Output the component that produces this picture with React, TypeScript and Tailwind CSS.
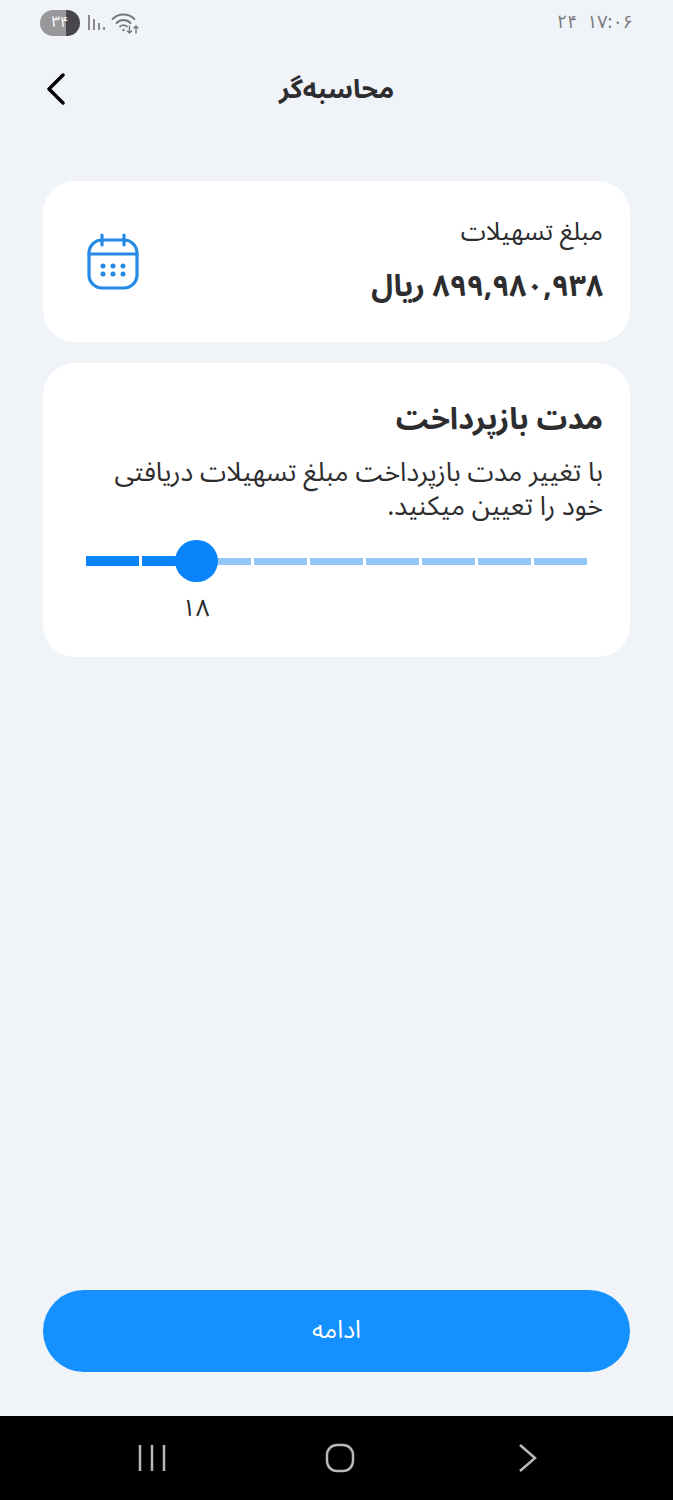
import React from 'react'

const persian = { fontFamily: '"Noto Sans Arabic", "DejaVu Sans", sans-serif' }

// status bar glyphs, drawn to match the phone's own
function Signal() {
  return (
    <svg width="20" height="18" viewBox="0 0 20 18" fill="none" stroke="#8a8a8d" strokeWidth="2">
      <path d="M2 1v15" />
      <path d="M7 5v11" />
      <path d="M12 9v7" />
      <path d="M17 13v3" />
    </svg>
  )
}

function Wifi() {
  return (
    <svg width="30" height="22" viewBox="0 0 30 22" fill="none" stroke="#77777a" strokeWidth="1.8" strokeLinecap="round">
      <path d="M1.5 7C7.5 1 17.500 1 23.500 7" />
      <path d="M5.500 11C9.500 7 15.500 7 19.500 11" />
      <path d="M9 14.500C11 13 14 13 16 14.500" />
      <circle cx="12.500" cy="18" r="1.200" fill="#77777a" stroke="none" />
      <path d="M18.500 14v7M16.500 19l2 2 2-2" strokeWidth="1.400" />
      <path d="M25 21v-7M23 16l2-2 2 2" strokeWidth="1.400" />
    </svg>
  )
}

function CalendarIcon() {
  return (
    <svg width="52" height="58" viewBox="0 0 52 58" fill="none" stroke="#2589e6" strokeWidth="3.200" strokeLinecap="round">
      <rect x="2" y="7" width="48" height="48" rx="13" />
      <path d="M2 21h48" />
      <path d="M15 2v10M37 2v10" />
      <g fill="#2589e6" stroke="none">
        <circle cx="16" cy="33" r="2.500" />
        <circle cx="26" cy="33" r="2.500" />
        <circle cx="36" cy="33" r="2.500" />
        <circle cx="16" cy="41" r="2.500" />
        <circle cx="26" cy="41" r="2.500" />
        <circle cx="36" cy="41" r="2.500" />
      </g>
    </svg>
  )
}

function RepaymentSlider() {
  const segments = [0, 1, 2, 3, 4, 5, 6, 7, 8]
  return (
    <div className="relative mr-[16px] mt-[16px] h-[42px]" dir="ltr">
      <div className="flex h-full items-center gap-[3px]">
        {segments.map((i) => (
          <div key={i} className={i < 2 ? 'h-[10px] flex-1 bg-[#0a84fb]' : 'h-[7px] flex-1 bg-[#92c6f5]'} />
        ))}
      </div>
      <div className="absolute left-[89px] top-0 h-[42px] w-[43px] rounded-full bg-[#0a84fb]" />
    </div>
  )
}

export default function App() {
  return (
    <div className="flex h-[1500px] flex-col bg-[#f0f3f8] text-[#2d2d30]" style={persian}>
      {/* Status bar */}
      <div className="flex h-[45px] items-center justify-between pl-10 pr-10" dir="ltr">
        <div className="flex items-center gap-[7px]">
          <div className="flex h-[26px] w-10 items-center justify-center rounded-full bg-[linear-gradient(90deg,#98989b_65%,#47474b_65%)] text-[15px] text-white">
            ۳۴
          </div>
          <Signal />
          <div className="-ml-[3px]">
            <Wifi />
          </div>
        </div>
        <div className="text-[18px] text-[#77777a]" dir="ltr">
          ۲۴&nbsp;&nbsp;۱۷:۰۶
        </div>
      </div>

      {/* Header */}
      <div className="relative flex h-[90px] items-center justify-center">
        <h1 className="text-[26.500px] font-bold leading-none" dir="rtl">
          محاسبه‌گر
        </h1>
        <svg
          className="absolute left-[46px] top-[28px]"
          width="20"
          height="32"
          viewBox="0 0 20 32"
          fill="none"
          stroke="#000"
          strokeWidth="3.400"
          strokeLinecap="round"
          strokeLinejoin="round"
        >
          <path d="M17 2 3 16l14 14" />
        </svg>
      </div>

      {/* Cards */}
      <div className="mt-[46px] flex flex-col gap-[21px] px-[43px]">
        <div className="flex h-[161px] items-center justify-between rounded-[32px] bg-white pl-[44px] pr-[27px]" dir="ltr">
          <CalendarIcon />
          <div className="pb-[2px] text-right" dir="rtl">
            <div className="text-[25.500px] leading-[34px] text-[#2d2d30]">مبلغ تسهیلات</div>
            <div className="mt-[18px] text-[29.800px] font-bold leading-[40px]">۸۹۹,۹۸۰,۹۳۸ ریال</div>
          </div>
        </div>

        <div className="h-[294px] rounded-[32px] bg-white pl-[43px] pr-[27px] pt-[35px]">
          <div className="text-right text-[30.500px] font-bold leading-[44px]" dir="rtl">
            مدت بازپرداخت
          </div>
          <p className="mt-[14px] text-right text-[26.600px] leading-[34px] text-[#2d2d30]" dir="rtl">
            با تغییر مدت بازپرداخت مبلغ تسهیلات دریافتی خود را تعیین میکنید.
          </p>
          <RepaymentSlider />
          <div className="ml-[96px] mt-[11px] w-6 text-center text-[24px] leading-[32px]" dir="ltr">
            ۱۸
          </div>
        </div>
      </div>

      {/* Continue button */}
      <div className="mt-auto px-[43px] pb-[44px]">
        <button className="flex h-[82px] w-full items-center justify-center rounded-full bg-[#1490ff] text-[25px] text-white" dir="rtl">
          ادامه
        </button>
      </div>

      {/* Android nav bar */}
      <div className="flex h-[84px] items-center justify-between bg-black pl-[138px] pr-[135px]">
        <svg width="28" height="28" viewBox="0 0 28 28" fill="none" stroke="#b9b9b9" strokeWidth="2.500">
          <path d="M2 1v26M14 1v26M26 1v26" />
        </svg>
        <svg className="-ml-[5px]" width="30" height="30" viewBox="0 0 30 30" fill="none" stroke="#b9b9b9" strokeWidth="2.500">
          <rect x="2" y="2" width="26" height="26" rx="10" />
        </svg>
        <svg width="20" height="30" viewBox="0 0 20 30" fill="none" stroke="#b9b9b9" strokeWidth="2.500">
          <path d="M2 2l15 13L2 28" />
        </svg>
      </div>
    </div>
  )
}
